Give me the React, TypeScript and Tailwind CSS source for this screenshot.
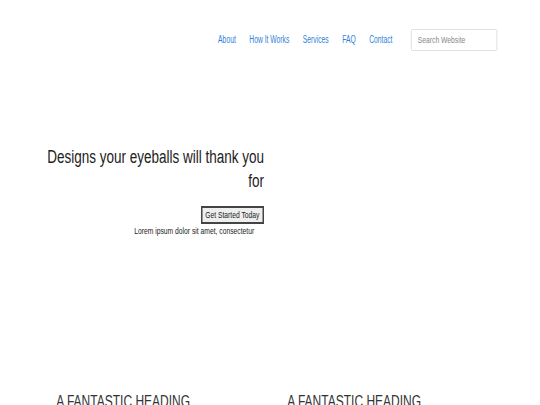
const navLinks = ['About', 'How It Works', 'Services', 'FAQ', 'Contact'];

// the page is laid out 720px wide and squeezed to 540px, as in the reference
export default function App() {
  return (
    <div className="h-[405px] w-[540px] overflow-hidden bg-white">
      <div
        className="w-[720px] origin-left scale-x-75 text-[#333]"
        style={{ fontFamily: '"Liberation Sans", Arial, sans-serif' }}
      >
        <header className="flex h-[80px] items-start justify-end pr-[57px] pt-[29px]">
          <nav className="mt-[5px] flex origin-right scale-x-90 gap-[20px] text-[10px] text-[#2f7fd9]">
            {navLinks.map((link) => (
              <a key={link} href="#" className="leading-[12px]">
                {link}
              </a>
            ))}
          </nav>
          <input
            placeholder="Search Website"
            className="ml-[25px] h-[22px] w-[115px] rounded-[2px] border border-[#ddd] px-[8px] text-[9px] placeholder:text-[#888]"
          />
        </header>

        <section className="ml-[52px] mt-[65px] flex w-[300px] flex-col items-end text-right">
          <h1 className="text-[18px] leading-[24px] text-[#222]">Designs your eyeballs will thank you for</h1>
          <button className="mt-[13px] h-[18px] border-2 border-[#444] bg-[#eee] px-[4px] text-[9px] leading-[12px] text-[#222]">
            Get Started Today
          </button>
          <p className="mr-[13px] mt-[1px] text-[9px] leading-[12px] text-[#222]">
            Lorem ipsum dolor sit amet, consectetur
          </p>
        </section>

        <section className="mt-[156px] flex pl-[75px]">
          <h2 className="w-[308px] text-[16px] leading-[18px] text-[#333]">A FANTASTIC HEADING</h2>
          <h2 className="text-[16px] leading-[18px] text-[#333]">A FANTASTIC HEADING</h2>
        </section>
      </div>
    </div>
  );
}
